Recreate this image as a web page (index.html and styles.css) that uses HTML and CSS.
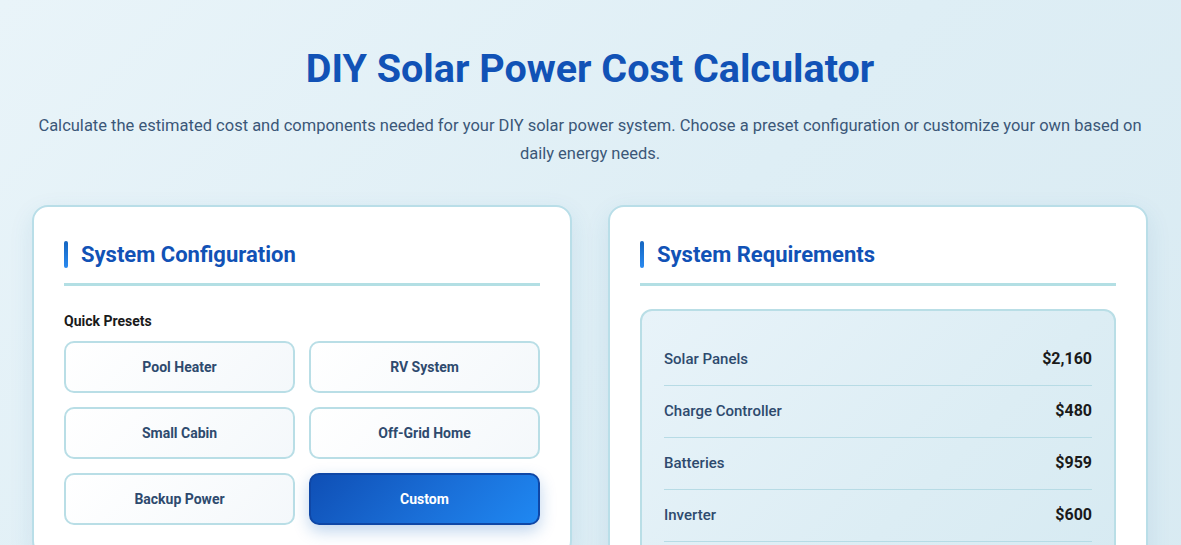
FILE: index.html
```html
<!DOCTYPE html>
<html lang="en">
<head>
<meta charset="utf-8">
<title>DIY Solar Power Cost Calculator</title>
<link rel="stylesheet" href="styles.css">
</head>
<body>
<div class="page">
  <header class="hero">
    <h1 class="title">DIY Solar Power Cost Calculator</h1>
    <p class="subtitle">Calculate the estimated cost and components needed for your DIY solar power system. Choose a preset configuration or customize your own based on daily energy needs.</p>
  </header>
  <main class="grid">
    <section class="card">
      <h2 class="card-title">System Configuration</h2>
      <div class="label">Quick Presets</div>
      <div class="presets">
        <button class="preset">Pool Heater</button>
        <button class="preset">RV System</button>
        <button class="preset">Small Cabin</button>
        <button class="preset">Off-Grid Home</button>
        <button class="preset">Backup Power</button>
        <button class="preset active">Custom</button>
      </div>
    </section>
    <section class="card">
      <h2 class="card-title">System Requirements</h2>
      <div class="summary">
        <div class="row"><span class="row-label">Solar Panels</span><span class="row-value">$2,160</span></div>
        <div class="row"><span class="row-label">Charge Controller</span><span class="row-value">$480</span></div>
        <div class="row"><span class="row-label">Batteries</span><span class="row-value">$959</span></div>
        <div class="row"><span class="row-label">Inverter</span><span class="row-value">$600</span></div>
        <div class="row"><span class="row-label">Wiring &amp; Mounting</span><span class="row-value">$350</span></div>
      </div>
    </section>
  </main>
</div>
</body>
</html>
```
FILE: styles.css
```css
* { box-sizing: border-box; }
html, body { margin: 0; padding: 0; }
body {
  font-family: Roboto, "Liberation Sans", Arial, sans-serif;
  background: linear-gradient(135deg, #e9f4f9 0%, #deeef5 50%, #d8eaf2 100%);
  min-height: 100vh;
  color: #1a1a1a;
}
.page {
  padding: 45px 33px 40px 32px;
}
.hero { text-align: center; }
.title {
  margin: 0;
  font-size: 39.5px;
  line-height: 48px;
  font-weight: 700;
  color: #1152b6;
}
.subtitle {
  margin: 19px auto 0;
  max-width: 1110px;
  font-size: 16.5px;
  line-height: 28px;
  color: #3b5778;
}
.grid {
  margin-top: 37px;
  display: grid;
  grid-template-columns: 1fr 1fr;
  gap: 36px;
  align-items: start;
}
.card {
  background: #ffffff;
  border: 2px solid #b9dee8;
  border-radius: 16px;
  padding: 30px;
  box-shadow: 0 8px 24px rgba(30, 110, 160, 0.10);
}
.card-title {
  position: relative;
  margin: 0 0 23px;
  padding: 5px 0 15px 17px;
  font-size: 22px;
  line-height: 26px;
  font-weight: 700;
  color: #1152b6;
  border-bottom: 3px solid #b3dfe4;
}
.card-title::before {
  content: "";
  position: absolute;
  left: 0;
  top: 4px;
  width: 4px;
  height: 27px;
  border-radius: 2px;
  background: linear-gradient(180deg, #1565c0, #2a8af0);
}
.label {
  font-size: 14px;
  font-weight: 700;
  color: #1a1a1a;
  margin: 0 0 11px;
  padding-top: 3px;
  line-height: 18px;
}
.presets {
  display: grid;
  grid-template-columns: 1fr 1fr;
  gap: 14px;
}
.preset {
  height: 52px;
  border: 2px solid #b9dee6;
  border-radius: 10px;
  background: linear-gradient(135deg, #ffffff, #f4f8fb);
  font-family: inherit;
  font-size: 14px;
  font-weight: 700;
  color: #2e4a6e;
  cursor: pointer;
}
.preset.active {
  background: linear-gradient(135deg, #0f4fb5 0%, #1a6fd8 55%, #1f88f2 100%);
  border-color: #0f47a6;
  color: #ffffff;
  box-shadow: 0 6px 16px rgba(21, 101, 192, 0.28);
}
.summary {
  border: 2px solid #b9dee6;
  border-radius: 12px;
  background: linear-gradient(135deg, #e8f3f9 0%, #dcedf4 60%, #d6eaf2 100%);
  padding: 23px 22px 10px;
}
.row {
  display: flex;
  justify-content: space-between;
  align-items: center;
  padding: 13px 0 14px;
  border-bottom: 1px solid #b7dbe5;
  line-height: 24px;
}
.row:last-child { border-bottom: none; }
.row-label {
  font-size: 15px;
  font-weight: 500;
  color: #2e4a6e;
}
.row-value {
  font-size: 16px;
  font-weight: 700;
  color: #1a1a1a;
}
```
